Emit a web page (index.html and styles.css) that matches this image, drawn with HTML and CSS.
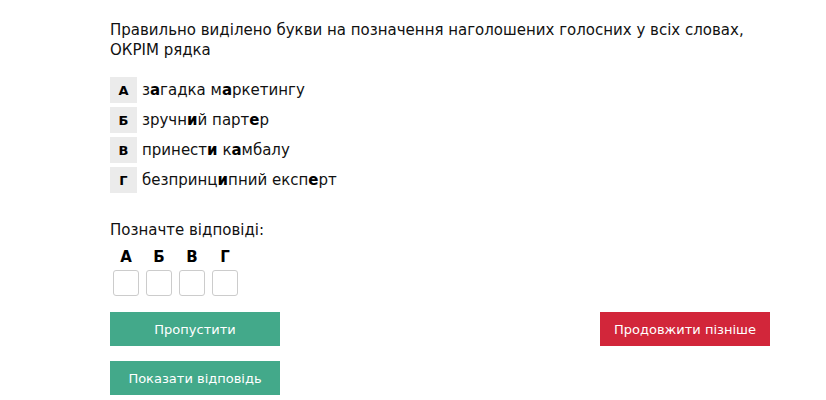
FILE: index.html
```html
<!DOCTYPE html>
<html lang="uk">
<head>
<meta charset="utf-8">
<link rel="stylesheet" href="styles.css">
</head>
<body>
<main class="task">
  <p class="question">Правильно виділено букви на позначення наголошених голосних у всіх словах, ОКРІМ рядка</p>
  <ul class="options">
    <li class="option"><span class="letter">А</span><span class="text">з<b>а</b>гадка м<b>а</b>ркетингу</span></li>
    <li class="option"><span class="letter">Б</span><span class="text">зручн<b>и</b>й парт<b>е</b>р</span></li>
    <li class="option"><span class="letter">В</span><span class="text">принест<b>и</b> к<b>а</b>мбалу</span></li>
    <li class="option"><span class="letter">Г</span><span class="text">безпринц<b>и</b>пний експ<b>е</b>рт</span></li>
  </ul>
  <p class="prompt">Позначте відповіді:</p>
  <div class="answers">
    <div class="answer"><span class="answer-label">А</span><span class="check"></span></div>
    <div class="answer"><span class="answer-label">Б</span><span class="check"></span></div>
    <div class="answer"><span class="answer-label">В</span><span class="check"></span></div>
    <div class="answer"><span class="answer-label">Г</span><span class="check"></span></div>
  </div>
  <div class="actions">
    <div class="actions-left">
      <button class="btn btn-green">Пропустити</button>
      <button class="btn btn-green">Показати відповідь</button>
    </div>
    <button class="btn btn-red">Продовжити пізніше</button>
  </div>
</main>
</body>
</html>
```

FILE: styles.css
```css
html, body {
  margin: 0;
  padding: 0;
  background: #fff;
}
body {
  font-family: "DejaVu Sans", sans-serif;
  color: #111;
}
.task {
  width: 660px;
  padding: 20px 0 0 110px;
}
.question {
  margin: 0;
  font-size: 15px;
  line-height: 20px;
}
.options {
  list-style: none;
  margin: 17px 0 0;
  padding: 0;
  display: flex;
  flex-direction: column;
  gap: 4px;
}
.option {
  display: flex;
  align-items: center;
  height: 26px;
}
.letter {
  width: 27px;
  height: 26px;
  background: #ebebeb;
  display: flex;
  align-items: center;
  justify-content: center;
  font-weight: bold;
  font-size: 13px;
  color: #000;
}
.text {
  margin-left: 5px;
  font-size: 15px;
}
.text b {
  color: #000;
}
.prompt {
  margin: 27px 0 0;
  font-size: 15px;
  line-height: 20px;
}
.answers {
  display: flex;
  gap: 7px;
  margin: 8px 0 0 3px;
}
.answer {
  display: flex;
  flex-direction: column;
  align-items: center;
  width: 26px;
}
.answer-label {
  font-weight: bold;
  font-size: 15px;
  line-height: 18px;
  color: #000;
}
.check {
  display: block;
  width: 24px;
  height: 24px;
  margin-top: 4px;
  border: 1px solid #ccc;
  border-radius: 3px;
}
.actions {
  display: flex;
  justify-content: space-between;
  align-items: flex-start;
  margin-top: 16px;
}
.actions-left {
  display: flex;
  flex-direction: column;
  gap: 15px;
}
.btn {
  width: 170px;
  height: 34px;
  border: 0;
  padding: 0;
  font-family: inherit;
  font-size: 13px;
  color: #fff;
}
.btn-green {
  background: #43a98a;
}
.btn-red {
  background: #d2263a;
}
```
